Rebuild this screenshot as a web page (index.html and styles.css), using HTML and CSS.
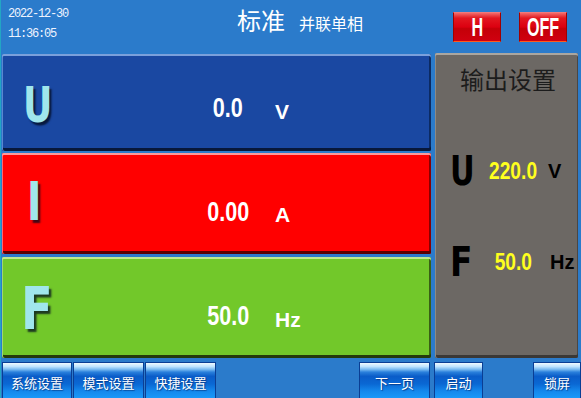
FILE: index.html
```html
<!DOCTYPE html>
<html lang="zh">
<head>
<meta charset="utf-8">
<title>标准 并联单相</title>
<link rel="stylesheet" href="styles.css">
</head>
<body>
<div class="screen">
  <header class="top">
    <div class="clock"><div>2022-12-30</div><div>11:36:05</div></div>
    <div class="title"><span class="t-main">标准</span><span class="t-sub">并联单相</span></div>
    <div class="flags"><span class="flag"><span class="flag-txt">H</span></span><span class="flag"><span class="flag-txt">OFF</span></span></div>
  </header>
  <main class="body">
    <section class="meters">
      <div class="meter m-u"><span class="sym s-u">U</span><span class="val">0.0</span><span class="unit">V</span></div>
      <div class="meter m-i"><span class="sym s-i">I</span><span class="val">0.00</span><span class="unit">A</span></div>
      <div class="meter m-f"><span class="sym s-f">F</span><span class="val">50.0</span><span class="unit">Hz</span></div>
    </section>
    <aside class="setpanel">
      <div class="set-title">输出设置</div>
      <div class="set-row r-u"><span class="set-sym">U</span><span class="set-val">220.0</span><span class="set-unit">V</span></div>
      <div class="set-row r-f"><span class="set-sym">F</span><span class="set-val">50.0</span><span class="set-unit">Hz</span></div>
    </aside>
  </main>
  <footer class="bar">
    <button class="btn">系统设置</button>
    <button class="btn">模式设置</button>
    <button class="btn">快捷设置</button>
    <button class="btn b-next">下一页</button>
    <button class="btn b-start">启动</button>
    <button class="btn b-lock">锁屏</button>
  </footer>
</div>
</body>
</html>
```
FILE: styles.css
```css
html, body {
  margin: 0;
  padding: 0;
}
body {
  width: 581px;
  height: 398px;
  overflow: hidden;
  background: #2b7bcb;
  font-family: "Noto Sans CJK SC", "Liberation Sans", sans-serif;
}
.screen {
  width: 581px;
  height: 398px;
  background: #2b7bcb;
  box-shadow: inset 1px 0 0 #22a6c4;
  display: flex;
  flex-direction: column;
}
.top {
  height: 54px;
  display: flex;
  align-items: flex-start;
}
.clock {
  width: 229px;
  padding: 4px 0 0 8px;
  font-family: "Liberation Mono", monospace;
  font-size: 12px;
  letter-spacing: -1.2px;
  line-height: 20px;
  color: #eef4ff;
}
.title {
  flex: 1;
  display: flex;
  align-items: baseline;
  padding-top: 5px;
  color: #ffffff;
}
.t-main {
  font-size: 24px;
  line-height: 30px;
  margin-right: 14px;
}
.t-sub {
  font-size: 16px;
  line-height: 20px;
}
.flags {
  display: flex;
  gap: 18px;
  padding: 12px 14px 0 0;
}
.flag {
  width: 46px;
  height: 28px;
  border: 1px solid #a00000;
  border-bottom-color: #ff5a1a;
  border-top-color: #f07a7a;
  background: linear-gradient(#f26a6a 0%, #e21820 18%, #dc0010 50%, #c40008 56%, #d00010 100%);
  display: flex;
  align-items: center;
  justify-content: center;
  overflow: hidden;
}
.flag-txt {
  display: inline-block;
  color: #ffffff;
  font-family: "Liberation Sans", sans-serif;
  font-weight: bold;
  font-size: 26px;
  line-height: 28px;
  transform: scaleX(0.62);
}
.body {
  height: 304px;
  display: flex;
  gap: 4px;
  padding: 0 3px 0 2px;
}
.meters {
  width: 429px;
  display: flex;
  flex-direction: column;
}
.meter {
  display: grid;
  grid-template-columns: 200px 52px 1fr;
  align-items: center;
  border-radius: 2px;
}
.m-u {
  height: 97px;
  background: #1a48a2;
  box-shadow: inset 0 2px 0 #7aa0dc, inset 1px 0 0 #5a86d0, inset 0 -3px 0 #08183a, inset -2px 0 0 #0c2a62;
}
.m-i {
  height: 101px;
  margin-top: 2px;
  background: #ff0000;
  box-shadow: inset 0 2px 0 #ff9a9a, inset 1px 0 0 #ff6a6a, inset 0 -3px 0 #5a0000, inset -2px 0 0 #8a0000;
}
.m-f {
  height: 101px;
  margin-top: 3px;
  background: #72c82a;
  box-shadow: inset 0 2px 0 #bfe890, inset 1px 0 0 #a0d870, inset 0 -3px 0 #243a0c, inset -2px 0 0 #3a6014;
}
.sym {
  justify-self: start;
  display: inline-block;
  margin-left: 21px;
  font-family: "DejaVu Sans", sans-serif;
  font-weight: bold;
  color: #a0e6ec;
  text-shadow: 3px 3px 2px rgba(0, 10, 30, 0.75);
  transform-origin: left center;
}
.s-u {
  font-size: 49px;
  line-height: 50px;
  margin-top: 6px;
  transform: scaleX(0.74);
}
.s-i {
  font-size: 54px;
  line-height: 56px;
  margin-left: 25px;
  margin-top: -4px;
  transform: scaleX(0.72);
}
.s-f {
  font-size: 58px;
  line-height: 58px;
  margin-top: 2px;
  margin-left: 19px;
  transform: scaleX(0.8);
}
.val {
  justify-self: center;
  display: inline-block;
  color: #ffffff;
  font-family: "Liberation Sans", sans-serif;
  font-weight: bold;
  font-size: 27px;
  line-height: 30px;
  transform: scaleX(0.8);
}
.unit {
  margin-left: 21px;
  color: #ffffff;
  font-family: "Liberation Sans", sans-serif;
  font-weight: bold;
  font-size: 21px;
  line-height: 26px;
}
.m-u .val { margin-top: 11px; }
.m-u .unit { margin-top: 19px; }
.m-i .val { margin-top: 17px; }
.m-i .unit { margin-top: 23px; }
.m-f .val { margin-top: 16px; }
.m-f .unit { margin-top: 25px; }
.setpanel {
  width: 143px;
  height: 305px;
  margin-top: -1px;
  background: #6c6864;
  border-radius: 2px;
  box-shadow: inset 0 2px 0 #aaa6a0, inset 1px 0 0 #8e8a84, inset 0 -3px 0 #3a3836, inset -1px 0 0 #4a4744;
  display: flex;
  flex-direction: column;
}
.set-title {
  padding: 12px 0 0 3px;
  text-align: center;
  font-size: 24px;
  line-height: 28px;
  color: #1c1c1c;
}
.set-row {
  display: grid;
  grid-template-columns: 32px 62px 1fr;
  align-items: center;
  height: 40px;
  padding-left: 15px;
}
.r-u { margin-top: 58px; }
.r-f { margin-top: 51px; }
.set-sym {
  display: inline-block;
  font-family: "DejaVu Sans", sans-serif;
  font-weight: bold;
  font-size: 40px;
  line-height: 40px;
  color: #000000;
  transform: scaleX(0.76);
  transform-origin: left center;
}
.r-f .set-sym {
  font-size: 41px;
  transform: scaleX(0.8);
}
.set-val {
  justify-self: center;
  display: inline-block;
  color: #ffff1e;
  font-family: "Liberation Sans", sans-serif;
  font-weight: bold;
  font-size: 24px;
  line-height: 28px;
  transform: scaleX(0.8);
}
.set-unit {
  margin-left: 4px;
  color: #000000;
  font-family: "Liberation Sans", sans-serif;
  font-weight: bold;
  font-size: 20px;
  line-height: 24px;
}
.r-f .set-unit { margin-left: 6px; }
.bar {
  margin-top: 4px;
  height: 36px;
  display: flex;
  padding-left: 2px;
}
.btn {
  box-sizing: border-box;
  width: 71px;
  height: 36px;
  margin: 0 1px 0 0;
  padding: 4px 0 0 0;
  border: 1px solid #0a3e94;
  border-bottom: none;
  background: linear-gradient(#f0faff 0%, #bfe4ff 10%, #7cbcf2 18%, #2a80dc 26%, #0a5cc8 38%, #0a68d4 60%, #1488ec 80%, #1a98f8 100%);
  color: #ffffff;
  font-family: "Noto Sans CJK SC", sans-serif;
  font-size: 13px;
  line-height: 18px;
  text-shadow: 1px 1px 1px rgba(0, 30, 90, 0.6);
  cursor: pointer;
}
.btn:first-child { width: 70px; }
.b-next { margin-left: 142px; margin-right: 4px; }
.b-start { width: 49px; margin-right: 50px; }
.b-lock { width: 48px; margin-right: 0; }
```
